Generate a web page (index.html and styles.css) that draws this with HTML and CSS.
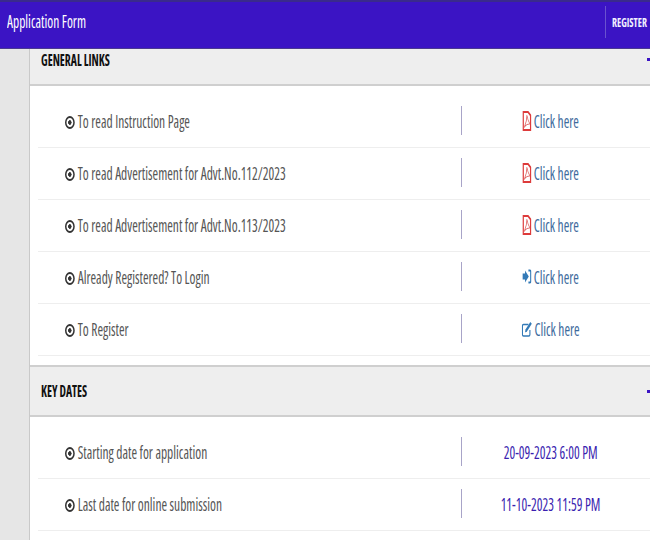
FILE: index.html
```html
<!DOCTYPE html>
<html lang="en">
<head>
    <meta charset="UTF-8">
    <meta name="viewport" content="width=device-width, initial-scale=1.0">
    <title>Application Form</title>
    <link rel="stylesheet" href="styles.css">
</head>
<body>

<div class="navbar">
    <span class="brand squeeze">Application Form</span>
    <a class="nav-link" href="#"><span class="squeeze">REGISTER</span></a>
</div>

<div class="page">
    <div class="content">
        <div class="panel-heading first">
            <span class="panel-title squeeze">GENERAL LINKS</span>
            <span class="collapse-mark"></span>
        </div>
        <div class="panel-body">
            <div class="row">
                <div class="label"><span class="squeeze"><span class="bullet"></span>To read Instruction Page</span></div>
                <div class="value">
                    <a class="squeeze-mid" href="#">
                        <svg class="icon" width="12" height="20" viewBox="0 0 12 20"><path d="M1 1h6.500L11 4.500V19H1z" fill="none" stroke="#dd3b3b" stroke-width="1.900"/><path d="M6 4c.6 3 1.500 6 4 9M2.500 16.500c1.500-2 4-3.700 7.500-3.500M6 4c0 4-1.500 9-3.500 12.500" fill="none" stroke="#e06a6a" stroke-width="1.100"/></svg>
                        Click here
                    </a>
                </div>
            </div>
            <div class="row">
                <div class="label"><span class="squeeze"><span class="bullet"></span>To read Advertisement for Advt.No.112/2023</span></div>
                <div class="value">
                    <a class="squeeze-mid" href="#">
                        <svg class="icon" width="12" height="20" viewBox="0 0 12 20"><path d="M1 1h6.500L11 4.500V19H1z" fill="none" stroke="#dd3b3b" stroke-width="1.900"/><path d="M6 4c.6 3 1.500 6 4 9M2.500 16.500c1.500-2 4-3.700 7.500-3.500M6 4c0 4-1.500 9-3.500 12.500" fill="none" stroke="#e06a6a" stroke-width="1.100"/></svg>
                        Click here
                    </a>
                </div>
            </div>
            <div class="row">
                <div class="label"><span class="squeeze"><span class="bullet"></span>To read Advertisement for Advt.No.113/2023</span></div>
                <div class="value">
                    <a class="squeeze-mid" href="#">
                        <svg class="icon" width="12" height="20" viewBox="0 0 12 20"><path d="M1 1h6.500L11 4.500V19H1z" fill="none" stroke="#dd3b3b" stroke-width="1.900"/><path d="M6 4c.6 3 1.500 6 4 9M2.500 16.500c1.500-2 4-3.700 7.500-3.500M6 4c0 4-1.500 9-3.500 12.500" fill="none" stroke="#e06a6a" stroke-width="1.100"/></svg>
                        Click here
                    </a>
                </div>
            </div>
            <div class="row">
                <div class="label"><span class="squeeze"><span class="bullet"></span>Already Registered? To Login</span></div>
                <div class="value">
                    <a class="squeeze-mid" href="#">
                        <svg class="icon" width="12" height="15" viewBox="0 0 12 15"><path d="M0 4.500h3.500V1.500L8.500 7.500l-5 6v-3H0z" fill="#337ab7"/><path d="M8 1.500h2a1.200 1.200 0 0 1 1.200 1.200v9.600a1.200 1.200 0 0 1-1.200 1.200H8" fill="none" stroke="#337ab7" stroke-width="1.800"/></svg>
                        Click here
                    </a>
                </div>
            </div>
            <div class="row">
                <div class="label"><span class="squeeze"><span class="bullet"></span>To Register</span></div>
                <div class="value">
                    <a class="squeeze-mid" href="#">
                        <svg class="icon" width="14" height="16" viewBox="0 0 14 16"><path d="M9 3.500H2.500A1.500 1.500 0 0 0 1 5v8.500A1.500 1.500 0 0 0 2.500 15h7a1.500 1.500 0 0 0 1.500-1.500V9" fill="none" stroke="#337ab7" stroke-width="1.500"/><path d="M4.500 11.500l.6-3L11.500 1 13.500 2.700 7.200 10.300z" fill="#337ab7"/></svg>
                        Click here
                    </a>
                </div>
            </div>
        </div>

        <div class="panel-heading">
            <span class="panel-title squeeze">KEY DATES</span>
            <span class="collapse-mark"></span>
        </div>
        <div class="panel-body">
            <div class="row">
                <div class="label"><span class="squeeze"><span class="bullet"></span>Starting date for application</span></div>
                <div class="value date"><span class="squeeze-mid">20-09-2023 6:00 PM</span></div>
            </div>
            <div class="row">
                <div class="label"><span class="squeeze"><span class="bullet"></span>Last date for online submission</span></div>
                <div class="value date"><span class="squeeze-mid">11-10-2023 11:59 PM</span></div>
            </div>
        </div>
    </div>
</div>

</body>
</html>
```

FILE: styles.css
```css
body {
    font-family: "Open Sans", sans-serif;
    font-stretch: 75%;
    font-size: 18px;
    color: #555;
    background-color: #fff;
    margin: 0;
    padding: 0;
    width: 650px;
    height: 540px;
    overflow: hidden;
}

a {
    color: #3d6a9c;
    text-decoration: none;
}

/* the whole shot is narrowed horizontally */
.squeeze,
.squeeze-mid {
    display: inline-block;
    white-space: nowrap;
    transform: scaleX(0.75);
}

.squeeze {
    transform-origin: left center;
}

.squeeze-mid {
    transform-origin: center;
}

.navbar {
    height: 40px;
    padding-bottom: 6px;
    background-color: #3b14c4;
    border-top: 2px solid #3a2a8c;
    border-bottom: 1px solid #4a3a90;
    display: flex;
    justify-content: space-between;
    align-items: center;
    color: #fff;
}

.brand {
    margin-left: 7px;
    margin-bottom: 2px;
}

.nav-link {
    color: #f2f0ff;
    font-size: 13px;
    font-weight: 700;
    border-left: 1px solid #6a52cf;
    height: 32px;
    line-height: 32px;
    padding-left: 6px;
    width: 38px;
}

.page {
    background-color: #e6e6e6;
    padding-left: 29px;
    height: 491px;
}

.content {
    background-color: #fff;
    border-left: 1px solid #c9c9c9;
    height: 100%;
}

.panel-heading {
    display: flex;
    justify-content: space-between;
    align-items: center;
    background-color: #eeeeee;
    border-top: 2px solid #cfcfcf;
    border-bottom: 2px solid #cfcfcf;
    height: 48px;
    padding-left: 11px;
}

.panel-heading.first {
    border-top: none;
    height: 35px;
    align-items: flex-start;
}

.panel-title {
    color: #111;
    font-size: 15.500px;
    font-weight: 700;
    line-height: 22px;
}

.collapse-mark {
    width: 3px;
    height: 3px;
    background-color: #3b14c4;
}

.first .collapse-mark {
    margin-top: 9px;
}

.panel-body {
    padding: 10px 0 9px 8px;
}

.row {
    display: flex;
    align-items: center;
    height: 49px;
    padding-bottom: 2px;
    border-bottom: 1px solid #eeeeee;
}

.label {
    width: 423px;
    padding-left: 27px;
    box-sizing: border-box;
}

.bullet {
    display: inline-block;
    vertical-align: -1px;
    width: 9px;
    height: 9px;
    margin-right: 4px;
    border: 2px solid #333;
    border-radius: 50%;
    background: radial-gradient(circle, #333 2px, #fff 2.500px);
}

.value {
    flex: 1;
    height: 29px;
    padding-right: 11px;
    display: flex;
    align-items: center;
    justify-content: center;
    border-left: 1px solid #a8a4c8;
}

.value a {
    display: flex;
    align-items: center;
}

.icon {
    margin-right: 3px;
    flex-shrink: 0;
}

.date {
    color: #3b1fb0;
}
```
